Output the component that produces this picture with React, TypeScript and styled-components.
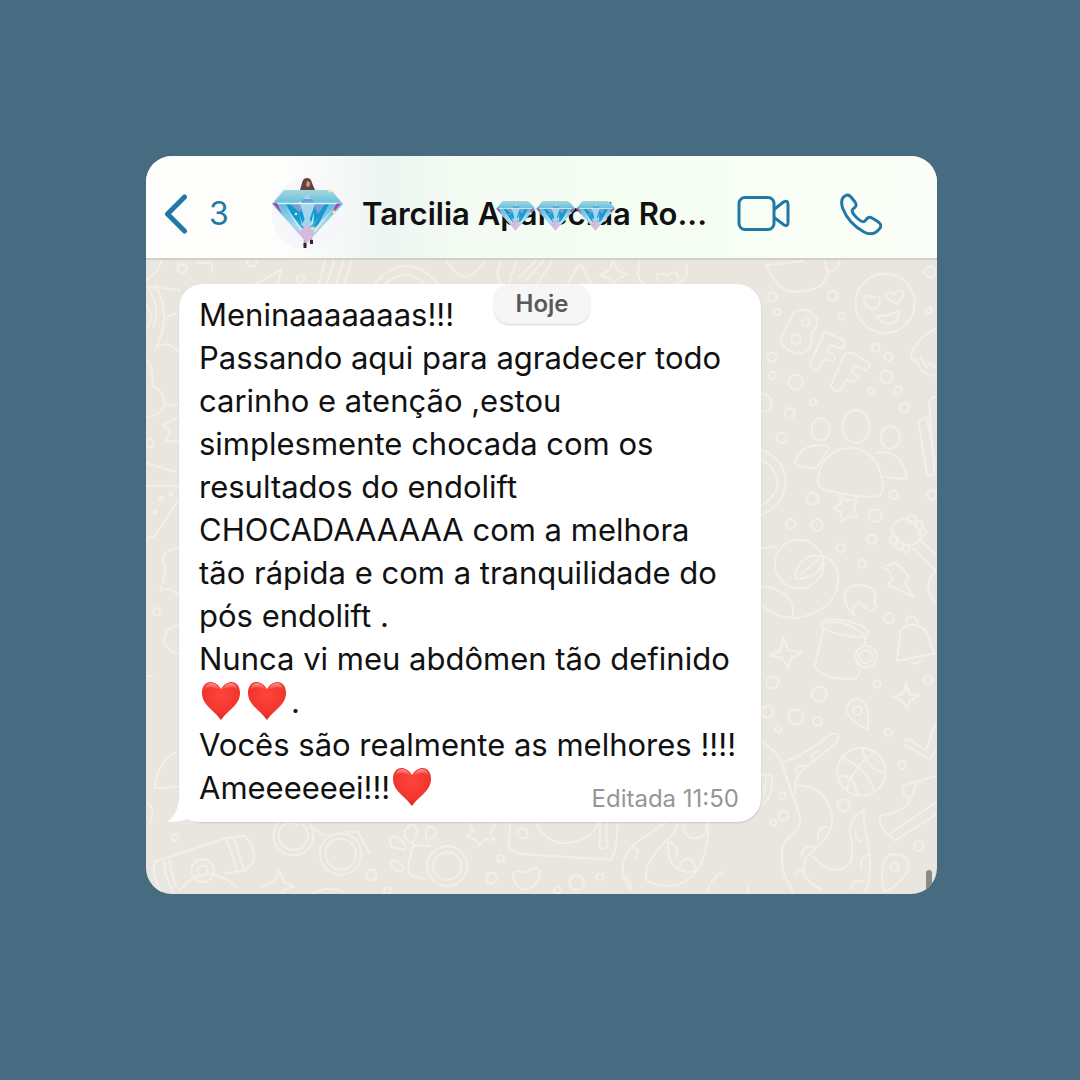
import React from 'react';
import styled, { createGlobalStyle } from 'styled-components';

const sans = `Inter, "Liberation Sans", sans-serif`;
const accent = '#1f78a8';

const GlobalStyle = createGlobalStyle`
  *, *::before, *::after { box-sizing: border-box; }
  body { margin: 0; background: #476b81; font-family: ${sans}; }
`;

const Page = styled.main`
  min-height: 100vh;
  padding: 156px 143px 186px 146px;
  background: #476b81;
`;

const Phone = styled.section`
  overflow: hidden;
  border-radius: 26px;
  background: #e9e6df;
`;

const Header = styled.header`
  display: flex;
  align-items: center;
  height: 104px;
  padding: 14px 55px 0 18px;
  border-bottom: 2px solid #cfd0ca;
  background: linear-gradient(90deg, #fefefd 0%, #fdfdfc 18%, #edf5f2 30%, #f3fbf2 40%, #f5fef3 62%, #fbfef8 100%);
`;

const IconButton = styled.button`
  display: flex;
  align-items: center;
  flex: none;
  padding: 0;
  border: 0;
  background: none;
  color: ${accent};
  font: 400 32px/40px ${sans};
  cursor: pointer;
`;

const BackButton = styled(IconButton)`
  gap: 20px;
  width: 108px;
`;

const Avatar = styled.div`
  display: flex;
  flex: none;
  width: 72px;
  height: 72px;
  border-radius: 50%;
  background: #f6f6fb;
`;

const Name = styled.h1`
  position: relative;
  flex: 1;
  min-width: 0;
  margin: 0 0 0 18px;
  color: #111;
  font: 600 31px/40px ${sans};
  white-space: nowrap;
`;

const Stickers = styled.span`
  position: absolute;
  top: 7px;
  left: 134px;
  display: flex;
`;

const Actions = styled.nav`
  display: flex;
  align-items: center;
  gap: 50px;
`;

const Chat = styled.div`
  position: relative;
  padding: 24px 176px 72px 33px;
`;

const Wallpaper = styled.svg`
  position: absolute;
  inset: 0;
  width: 100%;
  height: 100%;
`;

const Bubble = styled.article`
  position: relative;
  padding: 9px 20px 5px;
  border-radius: 24px;
  background: #fff;
  box-shadow: 0 1px 2px rgba(0, 0, 0, 0.14);
`;

const Tail = styled.svg`
  position: absolute;
  left: -14px;
  bottom: -1px;
`;

const Message = styled.div`
  position: relative;
  color: #111;
  font: 400 31px/43px ${sans};
  white-space: nowrap;
`;

const Line = styled.p`
  width: fit-content;
  height: 43px;
  margin: 0;
`;

const LastRow = styled.div`
  display: flex;
  justify-content: space-between;
  min-height: 51px;
`;

const HeartIcon = styled.svg`
  width: 40px;
  height: 40px;
  margin: 0 4px 0 2px;
  vertical-align: -8px;
`;

const Meta = styled.small`
  align-self: flex-end;
  margin-right: 2px;
  color: #969696;
  font: 400 24px/36px ${sans};
`;

const DayBadge = styled.time`
  position: absolute;
  top: 24px;
  left: 348px;
  width: 96px;
  border-radius: 16px;
  background: #f6f6f6;
  box-shadow: 0 1px 2px rgba(0, 0, 0, 0.18);
  color: #59595b;
  font: 600 24px/40px ${sans};
  text-align: center;
`;

const ScrollThumb = styled.span`
  position: absolute;
  right: 5px;
  bottom: 0;
  width: 6px;
  height: 24px;
  border-radius: 3px 3px 0 0;
  background: #8b8a86;
`;

function DiamondShape() {
  return (
    <>
      <defs>
        <linearGradient id="gemTop" x1="0" y1="0" x2="0" y2="1">
          <stop offset="0" stopColor="#a5d6dc" />
          <stop offset="1" stopColor="#62bfe0" />
        </linearGradient>
        <linearGradient id="gemBody" x1="0" y1="0" x2="0" y2="1">
          <stop offset="0" stopColor="#5cbbe2" />
          <stop offset=".55" stopColor="#a5d8ee" />
          <stop offset="1" stopColor="#d9a5d5" />
        </linearGradient>
      </defs>
      <path d="M12 0H59L71 14H0Z" fill="url(#gemTop)" />
      <path d="M0 14H71L35 53Z" fill="url(#gemBody)" />
      <path d="M14 14H57L44 39 35 25 27 39Z" fill="#1599d1" />
      <path d="M18 14h13l-3 9zM41 14h12l-7 10z" fill="#7b9fd6" />
      <path d="M35 4 43 14 35 37 28 14Z" fill="#a4d5ee" />
      <path d="M28 14h15l-3-5h-9z" fill="#68a5d4" />
      <path d="M14 17 31 40 27 23 35 49 42 22 41 40 62 18 35 53Z" fill="#c8e9f5" />
      <path d="M23 28 35 40 47 27 36 47Z" fill="#42abd9" />
      <path d="M27 42 35 34 43 42 35 53Z" fill="#d5b9df" />
      <path d="M2 13.500H69" stroke="#dff5fb" strokeWidth="1.400" />
      <path d="M1 13 10 24 5 13ZM69 13 60 24 64 14Z" fill="#c33a9e" />
      <g fill="#f8f486">
        <circle cx="58" cy="1" r="1.600" />
        <circle cx="62" cy="22" r="1.600" />
        <circle cx="28" cy="13" r="1.200" />
        <circle cx="24" cy="24" r="1.200" />
        <circle cx="40" cy="38" r="1.200" />
      </g>
    </>
  );
}

function AvatarArt() {
  return (
    <svg width="72" height="72" viewBox="0 0 72 72" aria-hidden="true">
      <path d="M28 12 30 5Q31 0 35 0t5 5l3 7Z" fill="#65443f" />
      <path d="M35 3q3 0 3 3l-1 3-3-1z" fill="#c99b88" />
      <path d="M33 60v8M39 58v7" stroke="#c49c91" strokeWidth="2.500" />
      <path d="M33 65v5M39.500 62v4" stroke="#29262f" strokeWidth="3" />
      <g transform="translate(0 12)"><DiamondShape /></g>
    </svg>
  );
}

function Gem() {
  return (
    <svg width="40" height="30" viewBox="0 0 72 54" aria-hidden="true">
      <DiamondShape />
    </svg>
  );
}

function Heart() {
  return (
    <HeartIcon viewBox="0 0 40 40" role="img" aria-label="❤️">
      <defs>
        <radialGradient id="heartFill" cx=".5" cy=".35" r=".65">
          <stop offset="0" stopColor="#ff453b" />
          <stop offset=".7" stopColor="#f2352d" />
          <stop offset="1" stopColor="#d8251f" />
        </radialGradient>
        <linearGradient id="heartShine" x1="0" y1="0" x2="0" y2="1">
          <stop offset="0" stopColor="#fff" stopOpacity=".45" />
          <stop offset="1" stopColor="#fff" stopOpacity="0" />
        </linearGradient>
      </defs>
      <path d="M20 8C17 3 13 1 9.500 1 4 1 1 6 1 12c0 12 12 17 19 27 7-10 19-15 19-27C39 6 36 1 30.500 1 27 1 23 3 20 8Z" fill="url(#heartFill)" />
      <path d="M3 9C4 4 7 2 10 2s7 2 9 7C13 6 8 5 3 9ZM21 9c2-5 6-7 9-7s6 2 7 7c-5-4-10-3-16 0Z" fill="url(#heartShine)" />
    </HeartIcon>
  );
}

type DotList = [number, number, number][];

const rightTopDots: DotList = [
  [67, 140, 14], [81, 186, 10], [247, 137, 15], [275, 199, 10], [377, 293, 12], [416, 320, 12],
  [409, 380, 18], [444, 421, 12], [364, 423, 10], [463, 473, 14], [65, 322, 14], [68, 376, 11],
  [137, 396, 22], [189, 456, 10], [119, 489, 15], [94, 563, 15], [540, 66, 16], [536, 180, 9],
  [167, 216, 12], [138, 267, 15],
];
const rightMidDots: DotList = [
  [188, 57, 18], [122, 131, 14], [201, 135, 17], [376, 107, 19], [431, 44, 13], [546, 45, 14],
  [272, 204, 13], [365, 178, 14], [336, 251, 12], [417, 415, 15], [67, 607, 18], [208, 642, 22],
  [382, 612, 11], [534, 600, 12], [348, 530, 20], [348, 530, 32],
];
const rightLowDots: DotList = [
  [52, 65, 18], [137, 81, 22], [202, 94, 13], [85, 117, 10], [415, 128, 11], [456, 225, 12],
  [281, 345, 18], [101, 377, 14], [70, 399, 9], [97, 317, 10], [506, 468, 14], [322, 62, 13],
  [434, 531, 12],
];
const footLeftDots: DotList = [
  [188, 632, 15], [188, 632, 34], [460, 526, 44], [460, 526, 60], [602, 582, 46], [602, 582, 62],
  [694, 645, 16], [105, 532, 10], [922, 618, 42], [922, 618, 60], [742, 692, 10],
];
const footMidDots: DotList = [
  [218, 190, 15], [152, 265, 10], [124, 324, 16], [380, 338, 22], [450, 321, 10], [322, 360, 10],
];

function Dots({ items }: { items: DotList }) {
  return <>{items.map(([x, y, r], i) => <circle key={i} cx={x} cy={y} r={r} />)}</>;
}

function ChatWallpaper() {
  return (
    <Wallpaper viewBox="146 260 791 634" preserveAspectRatio="xMaxYMin slice" aria-hidden="true">
      <g fill="none" stroke="#f3efe8" strokeWidth="6" strokeLinecap="round" strokeLinejoin="round">
        <g transform="translate(750 250) scale(.33333)">
          <Dots items={rightTopDots} />
          <path d="M45 42Q70 95 108 123q60 10 110-20l20-38M55 45l105-12M225 35l7 30q35-5 38-30" />
          <circle cx="405" cy="160" r="89" />
          <path d="M341 151q-3-18 16-14l13 8q18-13 20 6-3 18-20 29-22-10-29-29ZM407 139q0-17 17-12l8 6q14-19 28-9 2 20-18 37-25-7-35-22ZM380 198q30 2 67-15 1 36-30 38-25-1-37-23Z" />
          <path d="M92 265l38-78q35-20 65 10 17 25-10 50 5 60-35 64-50-5-58-46ZM180 344l43-98 58 24q12 15-6 26l-35-10-8 19 21 12q5 13-8 17l-24-6-17 31q-18 8-24-15ZM242 407l43-96 23-2 50 32q5 14-10 21l-33-16-11 20 20 12q2 12-12 17l-22-8-18 33q-20 10-30-13Z" />
          <path d="M560 235q-50 20-77 75 4 35 16 16 10 50 60 52M512 322l16 30 12-15 15 16M560 440q-20 0-22 25l15 210M505 515l25 150q8 20 25 5M505 515l25-15 25 140" />
          <ellipse cx="212" cy="538" rx="27" ry="34" /><ellipse cx="318" cy="530" rx="41" ry="49" /><ellipse cx="421" cy="562" rx="29" ry="34" />
          <path d="M203 690q10-90 97-97 80 5 97 97M133 635q28-64 105-45l-40 66-57-8ZM378 608q80-10 92 76-30 5-68-5M35 430q30 5 30 30t-30 26M35 600q65 25 72 90M35 630q40 20 45 60M203 690q-3 32 50 35 70 20 130 14 20-10 14-49" />
        </g>
        <g transform="translate(750 480) scale(.33333)">
          <Dots items={rightMidDots} />
          <path d="M35 105q70-30 72-105M35 75q50-30 48-75" />
          <path d="m268 42 20 21 31-6-6 30 9 24-27-2-20 15-3-27-23-15 25-10Z" />
          <circle cx="148" cy="252" r="73" /><path d="M35 205l45-5M220 228q45 15 44 75-5 65-70 95-80 40-158-20M35 320q80 5 94 65v28M137 295q-2-50 48-67 25-4 34 8-5 60-82 59ZM152 282l54-45" />
          <path d="M425 155q0-30 33-40 35 3 55 45 0 30-35 37-38-5-53-42ZM490 205l65 65M507 178l48 45M555 275q-40 45 0 90" />
          <g><circle cx="485" cy="118" r="12" /><circle cx="507" cy="135" r="12" /><circle cx="515" cy="156" r="12" /><circle cx="432" cy="180" r="12" /><circle cx="450" cy="198" r="12" /><circle cx="467" cy="205" r="12" /></g>
          <path d="m395 263 38-14q32 15 42 45l-12 15 27 42-78-37 16-13-12-30ZM302 396q-40-55 5-79 65-6 70 28-8 25 4 37-14 15-28 6l-25-20-20 14 4 23Z" />
          <ellipse cx="284" cy="444" rx="72" ry="22" transform="rotate(12 284 444)" /><path d="M228 430q50-15 110 32M220 448l-26 110q25 45 120 38 10-3 16-26M345 474l-3 22M60 526l32-15 8-38 16 38 38 6-30 18-10 30-16-30ZM440 540l13-90q20-20 42-15 40 5 46 60l14 25-115 23M470 431q-5-20 15-23 18 5 15 26M485 545q10 15 25-3M430 650l30-10 8-32 12 32 26 7" />
        </g>
        <g transform="translate(750 690) scale(.33333)">
          <Dots items={rightLowDots} />
          <path d="M290 64q0-35 34-38 37 8 30 92-50-20-64-54ZM428 21l30-8 7-20 14 20 28 4-26 13-10 25-15-25ZM465 155q10-12 25 0l38 27 28-82M466 165l75 45 15-30" />
          <circle cx="334" cy="245" r="72" /><path d="M275 202q80 35 96 98M337 174q10 60 64 75M267 258q50-3 54 56M374 184Q310 230 290 298" />
          <path d="M35 155q50 30 60 65 75-28 148-88 35-4 13 29l-95 75q-33 35-24 75M95 220l56 163q4 35-38 62-30 30-10 110l25 50M135 287q65-3 94 45 40 65-8 118l-50 50q-35 60 45 100M188 500q30 35 74 40 45-10 45-46 0-40-9-72 10-45 43-62-2 45 13 95 15 90-8 150" />
          <path d="M185 205q-5-20 20-20M138 247q-5-25 28-18M230 410q-30 0-25 40M155 500q0-33 35-30M318 425q-5 25 18 30M355 495q-28 5-20 40M302 600q5-35 37-24M140 550q12-20 20 0" />
          <path d="M560 257l-102 31 3 25 20 13q-5 35-90 51-12 30 45 75l124-80M420 430l140-95M500 280l-16 42M400 600q-15-105 30-108 50 0 45 45-10 30-60 65ZM35 255l31-2q5 70-31 92M48 265l-5 50" />
        </g>
        <g transform="translate(140 660) scale(.33333)">
          <Dots items={footLeftDots} />
          <path d="M45 605l210-70 60-8q35 40 25 80-12 20-35 25l-50 8M45 605q-15 25 20 95M72 605q0 40 25 85M88 600q5 40 20 80M260 537l35 105M280 533l33 98M120 690q70-90 170-10M365 680l38-16 15-32 14 34 29 14-29 10-12 18M510 500l40 25M620 515h35l35 65M520 700q40-25 90-5M45 385q5-80 65-110M50 385l65-5M20 50q10-5 18 0M24 430q25 20 5 60" />
          <path d="M815 550q-25-10-20-40 20-28 35-5 0 35-15 45ZM860 540q-10-30 10-40 25 5 15 30ZM755 560q-15-25 10-30 35 10 30 40ZM755 600q-8 28 30 35 20-20-30-35ZM870 558l-50-2q-25 80-8 90l45 12M475 495l-35-10" />
        </g>
        <g transform="translate(450 770) scale(.33333)">
          <Dots items={footMidDots} />
          <path d="M60 158l8 27-18 15 27 8 12 20 13-21 32 2-13-20 14-28M180 158l-4 80 35 14 270 17q18-10 22-110M258 158q30 62 90 62 75-8 98-62M450 155v55q-10 25 10 28 20-10 10-28v-55M535 350q-50-90 50-150l60-42M680 160q0 35-35 55-80 90-50 120 60 25 110 0 70-45 70-175M655 215q-8 95 75 90M700 160q0 45 35 45t35-45M655 215q35 10 22 50M690 290q-3-20 30-25 20 20 15 38M515 320q30 0 27 40M545 235q30-5 10 30M190 323q-5-25 28-18l15 3q16-23 36-7 5 40-40 58-32-5-39-36ZM775 365q0-30 42-60M895 350v25" />
        </g>
        <g transform="translate(140 250) scale(.33333)">
          <path d="M20 90q35-20 45-60M20 110l100 10M25 115q38 60 15 115M45 105q55 90 0 195M20 165q25 35 0 70M75 205q30-20 38-10M55 290q30-20 60 15M20 330q20 15 17 80 35 10 36 50-5 35-50 40M75 464h38M68 524l45-20M68 524l20 20-10 30h37M20 640l90 27M20 708h95M20 864l24-5 71-110M115 895q-50 5-46 40 15 30-10 90 30-20 55 10M115 1125q-45 10-42 50 15 35 42 35" />
          <circle cx="128" cy="57" r="13" /><circle cx="30" cy="580" r="12" /><circle cx="62" cy="747" r="6" /><circle cx="93" cy="731" r="5" /><circle cx="45" cy="787" r="5" /><circle cx="50" cy="1085" r="11" />
        </g>
        <g transform="translate(180 250) scale(.33333)">
          <path d="M50 38h45v30M230 100l75-42-12 45M437 30l-22 75M462 30l-22 75M490 30l-22 75M515 30l-22 75M580 105q100-115 195 0M610 105q65-60 130 0M800 35q50 75 90 25l27-25M965 35q-25 35 0 68M1010 32l-25 73M1068 30l-50 50M1090 30l-50 60M1115 35l-45 70M1165 100l35-60 34 60M1260 75l28-14 12-30 12 30 30 13-30 12-12 18-12-18ZM1380 35q-25 70 45 75 120 0 90-75M1435 90q-20-25 30-15 25-20 30 10" />
          <circle cx="5" cy="55" r="14" /><circle cx="215" cy="35" r="14" /><circle cx="362" cy="88" r="12" />
        </g>
      </g>
    </Wallpaper>
  );
}

const lines = [
  'Meninaaaaaaas!!!',
  'Passando aqui para agradecer todo',
  'carinho e atenção ,estou',
  'simplesmente chocada com os',
  'resultados do endolift',
  'CHOCADAAAAAA com a melhora',
  'tão rápida e com a tranquilidade do',
  'pós endolift .',
  'Nunca vi meu abdômen tão definido',
];

export default function App() {
  return (
    <>
      <GlobalStyle />
      <Page>
        <Phone>
          <Header>
            <BackButton type="button" aria-label="Voltar, 3">
              <svg width="25" height="40" viewBox="0 0 25 40" fill="none" stroke="currentColor" strokeWidth="5" strokeLinecap="round" strokeLinejoin="round" aria-hidden="true">
                <path d="M20.500 3 3.500 20l17 17" />
              </svg>
              3
            </BackButton>
            <Avatar><AvatarArt /></Avatar>
            <Name>
              Tarcilia Aparecida Ro...
              <Stickers><Gem /><Gem /><Gem /></Stickers>
            </Name>
            <Actions>
              <IconButton type="button" aria-label="Chamada de vídeo">
                <svg width="53" height="36" viewBox="0 0 53 36" fill="none" stroke="currentColor" strokeWidth="3" strokeLinejoin="round" aria-hidden="true">
                  <rect x="2" y="1.500" width="35" height="32" rx="6" />
                  <path d="M37 13.500 46.500 6Q51 3.500 51 8.500v18q0 5-4.500 2L37 21.500" />
                </svg>
              </IconButton>
              <IconButton type="button" aria-label="Ligar">
                <svg width="42" height="42" viewBox="0 0 42 42" fill="none" stroke="currentColor" strokeWidth="3" strokeLinejoin="round" aria-hidden="true">
                  <path d="M5 3C1 5 1 11 3 16c4 10 12 18 21 23 6 3 12 2 16-4 2-3 0-5-3-7l-5-3c-3-2-5 0-7 3-2 2-6-1-9-4s-5-6-3-8c3-2 4-4 2-7l-4-5C9 2 7 1 5 3Z" />
                </svg>
              </IconButton>
            </Actions>
          </Header>
          <Chat>
            <ChatWallpaper />
            <Bubble>
              <Tail width="40" height="26" viewBox="0 0 40 26" aria-hidden="true">
                <path d="M14 0Q13 18 2 25q14 0 20-3 6 3 12 3h6V0Z" fill="#fff" />
              </Tail>
              <Message>
                {lines.map((text) => <Line key={text}>{text}</Line>)}
                <Line><Heart /><Heart />.</Line>
                <Line>Vocês são realmente as melhores !!!!</Line>
                <LastRow>
                  <Line>Ameeeeeei!!!<Heart /></Line>
                  <Meta>Editada 11:50</Meta>
                </LastRow>
              </Message>
            </Bubble>
            <DayBadge>Hoje</DayBadge>
            <ScrollThumb />
          </Chat>
        </Phone>
      </Page>
    </>
  );
}
